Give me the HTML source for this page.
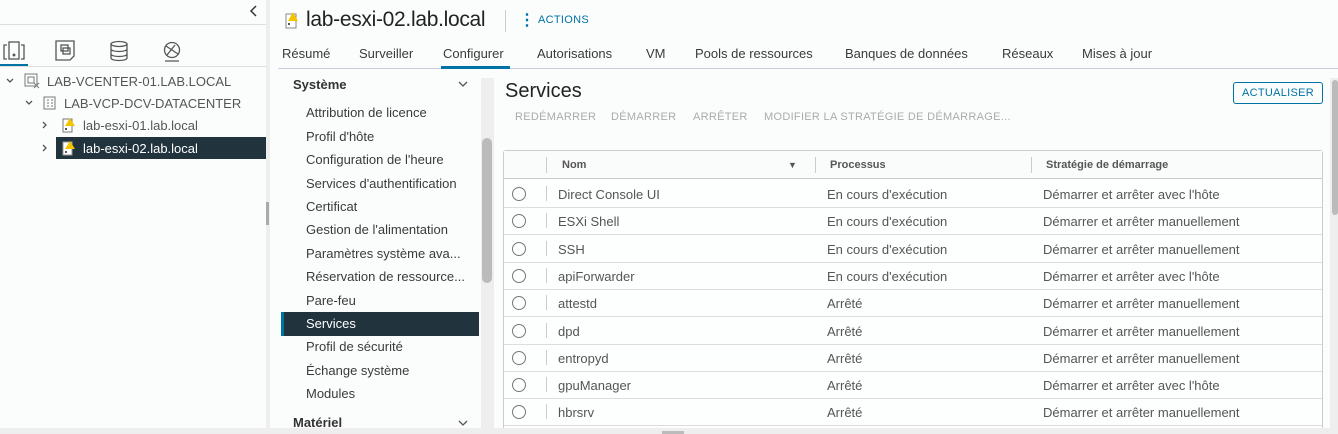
<!DOCTYPE html>
<html><head><meta charset="utf-8"><style>
*{margin:0;padding:0;box-sizing:border-box}
html,body{width:1338px;height:434px;overflow:hidden}
body{background:#fbfdfd;font-family:"Liberation Sans",sans-serif;color:#333;position:relative;font-size:13px}
.a{position:absolute;white-space:nowrap}
.nav{font-size:13px;color:#3a3a3a}
.th{font-size:11px;font-weight:bold;color:#565656}
.td{font-size:13px;color:#555}
.rad{position:absolute;width:14px;height:14px;border:1px solid #777;border-radius:50%;left:512px}
.sep{position:absolute;width:1px;background:#ccc}
</style></head><body>
<!-- left pane -->
<div class="a" style="left:0;top:24px;width:266px;height:1px;background:#ddd"></div>
<svg class="a" style="left:249px;top:5px" width="10" height="12" viewBox="0 0 10 12" fill="none" stroke="#333" stroke-width="1.5"><path d="M7 1L2 6l5 5"/></svg>
<div class="a" style="left:0;top:66px;width:266px;height:1px;background:#ddd"></div>
<div class="a" style="left:0;top:64px;width:28px;height:2px;background:#0072a3"></div>
<svg class="a" style="left:3px;top:40px" width="22" height="22" viewBox="0 0 22 22" fill="none" stroke="#555" stroke-width="1.3"><rect x="6" y="2" width="10" height="17"/><path d="M4 5H1v14h3M18 5h3v14h-3"/><circle cx="11" cy="15" r=".8" fill="#555"/></svg>
<svg class="a" style="left:55px;top:40px" width="22" height="22" viewBox="0 0 22 22" fill="none" stroke="#555" stroke-width="1.3"><path d="M1 1h18v15l-4 4H1z"/><rect x="6" y="5" width="7" height="6"/><rect x="8" y="8" width="7" height="6"/></svg>
<svg class="a" style="left:108px;top:40px" width="22" height="22" viewBox="0 0 22 22" fill="none" stroke="#555" stroke-width="1.3"><ellipse cx="11" cy="4" rx="8" ry="2.5"/><path d="M3 4v14c0 1.5 3.5 2.5 8 2.5s8-1 8-2.5V4M3 9c0 1.5 3.5 2.5 8 2.5s8-1 8-2.5M3 14c0 1.5 3.5 2.5 8 2.5s8-1 8-2.5"/></svg>
<svg class="a" style="left:161px;top:40px" width="22" height="22" viewBox="0 0 22 22" fill="none" stroke="#555" stroke-width="1.3"><circle cx="11" cy="10" r="7.5"/><path d="M5 6l12 8M6 15l8-10M4 21h14"/></svg>
<svg class="a" style="left:6px;top:78px" width="8" height="6" viewBox="0 0 8 6" fill="none" stroke="#555" stroke-width="1.3"><path d="M1 1l3 3 3-3"/></svg>
<svg class="a" style="left:24px;top:73px" width="16" height="16" viewBox="0 0 16 16" fill="none" stroke="#777"><rect x="1" y="1" width="12" height="12"/><rect x="4" y="4" width="6" height="6"/><path d="M10 10l5 5M15 10l-5 5"/></svg>
<div class="a nav" style="left:47px;top:74px;color:#555">LAB-VCENTER-01.LAB.LOCAL</div>
<svg class="a" style="left:25px;top:100px" width="8" height="6" viewBox="0 0 8 6" fill="none" stroke="#555" stroke-width="1.3"><path d="M1 1l3 3 3-3"/></svg>
<svg class="a" style="left:43px;top:96px" width="14" height="14" viewBox="0 0 14 14" fill="none" stroke="#777"><rect x="1" y="1" width="11" height="12"/><path d="M4 4h2M8 4h2M4 7h2M8 7h2M4 10h2M8 10h2"/></svg>
<div class="a nav" style="left:64px;top:96px;color:#555">LAB-VCP-DCV-DATACENTER</div>
<svg class="a" style="left:42px;top:121px" width="6" height="8" viewBox="0 0 6 8" fill="none" stroke="#555" stroke-width="1.3"><path d="M1 1l3 3-3 3"/></svg>
<svg class="a" style="left:62px;top:117px" width="14" height="16" viewBox="0 0 14 16"><rect x="1" y="2" width="9" height="13" fill="#fff" stroke="#777"/><path d="M8 1l5 8H3z" fill="#f5c400"/><rect x="3" y="11" width="2" height="2" fill="#555"/></svg>
<div class="a nav" style="left:83px;top:118px;color:#555">lab-esxi-01.lab.local</div>
<div class="a" style="left:56px;top:137px;width:210px;height:22px;background:#21333d"></div>
<svg class="a" style="left:42px;top:144px" width="6" height="8" viewBox="0 0 6 8" fill="none" stroke="#555" stroke-width="1.3"><path d="M1 1l3 3-3 3"/></svg>
<svg class="a" style="left:62px;top:140px" width="14" height="16" viewBox="0 0 14 16"><rect x="1" y="2" width="9" height="13" fill="#fff" stroke="#999"/><path d="M8 1l5 8H3z" fill="#f5c400"/><rect x="3" y="11" width="2" height="2" fill="#555"/></svg>
<div class="a nav" style="left:83px;top:141px;color:#fff">lab-esxi-02.lab.local</div>
<div class="a" style="left:266px;top:0;width:4px;height:434px;background:#eee"></div>
<div class="a" style="left:266px;top:202px;width:3px;height:23px;background:#aaa"></div>
<!-- header -->
<svg class="a" style="left:285px;top:11px" width="14" height="18" viewBox="0 0 14 18"><rect x="1" y="3" width="10" height="14" fill="#fff" stroke="#888"/><path d="M8 1l5 9H3z" fill="#f5c400"/><rect x="3" y="12" width="2" height="2" fill="#555"/></svg>
<div class="a" style="left:306px;top:8px;font-size:21px;color:#222;letter-spacing:-.3px">lab-esxi-02.lab.local</div>
<div class="a" style="left:505px;top:10px;width:1px;height:22px;background:#ccc"></div>
<div class="a" style="left:519px;top:10px;font-size:16px;font-weight:bold;color:#0072a3">&#8942;</div>
<div class="a" style="left:538px;top:14px;font-size:11px;color:#0072a3;letter-spacing:.3px">ACTIONS</div>
<div class="a nav" style="left:282px;top:46px">Résumé</div>
<div class="a nav" style="left:359px;top:46px">Surveiller</div>
<div class="a nav" style="left:443px;top:46px">Configurer</div>
<div class="a nav" style="left:537px;top:46px">Autorisations</div>
<div class="a nav" style="left:646px;top:46px">VM</div>
<div class="a nav" style="left:695px;top:46px">Pools de ressources</div>
<div class="a nav" style="left:845px;top:46px">Banques de données</div>
<div class="a nav" style="left:1002px;top:46px">Réseaux</div>
<div class="a nav" style="left:1082px;top:46px">Mises à jour</div>
<div class="a" style="left:278px;top:68px;width:1060px;height:1px;background:#ccd"></div>
<div class="a" style="left:441px;top:66px;width:69px;height:3px;background:#0072a3"></div>
<!-- config nav -->
<div class="a" style="left:293px;top:77px;font-size:13px;font-weight:bold;color:#333">Système</div>
<svg class="a" style="left:458px;top:81px" width="10" height="7" viewBox="0 0 10 7" fill="none" stroke="#555" stroke-width="1.3"><path d="M1 1l4 4 4-4"/></svg>
<div class="a" style="left:281px;top:312px;width:198px;height:24px;background:#21333d"></div>
<div class="a" style="left:281px;top:312px;width:3px;height:24px;background:#0072a3"></div>
<div class="a nav" style="left:306px;top:105px">Attribution de licence</div>
<div class="a nav" style="left:306px;top:129px">Profil d'hôte</div>
<div class="a nav" style="left:306px;top:152px">Configuration de l'heure</div>
<div class="a nav" style="left:306px;top:176px">Services d'authentification</div>
<div class="a nav" style="left:306px;top:199px">Certificat</div>
<div class="a nav" style="left:306px;top:222px">Gestion de l'alimentation</div>
<div class="a nav" style="left:306px;top:246px">Paramètres système ava...</div>
<div class="a nav" style="left:306px;top:269px">Réservation de ressource...</div>
<div class="a nav" style="left:306px;top:293px">Pare-feu</div>
<div class="a nav" style="left:306px;top:316px;color:#fff">Services</div>
<div class="a nav" style="left:306px;top:339px">Profil de sécurité</div>
<div class="a nav" style="left:306px;top:363px">Échange système</div>
<div class="a nav" style="left:306px;top:386px">Modules</div>
<div class="a" style="left:293px;top:415px;font-size:13px;font-weight:bold;color:#333">Matériel</div>
<svg class="a" style="left:458px;top:420px" width="10" height="7" viewBox="0 0 10 7" fill="none" stroke="#555" stroke-width="1.3"><path d="M1 1l4 4 4-4"/></svg>
<div class="a" style="left:481px;top:78px;width:13px;height:350px;background:#eee"></div>
<div class="a" style="left:482px;top:138px;width:10px;height:145px;background:#bbb;border-radius:5px"></div>
<!-- services -->
<div class="a" style="left:505px;top:80px;font-size:20px;color:#222">Services</div>
<div class="a" style="left:1233px;top:82px;width:90px;height:22px;border:1px solid #0072a3;border-radius:3px;font-size:11px;color:#0072a3;text-align:center;line-height:20px;letter-spacing:.3px">ACTUALISER</div>
<div class="a" style="left:515px;top:111px;font-size:11px;color:#aaa;letter-spacing:.3px">REDÉMARRER</div>
<div class="a" style="left:611px;top:111px;font-size:11px;color:#aaa;letter-spacing:.3px">DÉMARRER</div>
<div class="a" style="left:693px;top:111px;font-size:11px;color:#aaa;letter-spacing:.3px">ARRÊTER</div>
<div class="a" style="left:764px;top:111px;font-size:11px;color:#aaa;letter-spacing:.3px">MODIFIER LA STRATÉGIE DE DÉMARRAGE...</div>
<div class="a" style="left:503px;top:150px;width:820px;height:290px;border:1px solid #ccc;border-radius:3px;background:#fdfefe"></div>
<div class="a" style="left:504px;top:151px;width:818px;height:28px;background:#fafbfb;border-bottom:1px solid #ccc"></div>
<div class="sep" style="left:546px;top:157px;height:16px"></div>
<div class="sep" style="left:815px;top:157px;height:16px"></div>
<div class="sep" style="left:1031px;top:157px;height:16px"></div>
<div class="a th" style="left:562px;top:159px">Nom</div>
<div class="a" style="left:788px;top:160px;font-size:9px;color:#555">&#9660;</div>
<div class="a th" style="left:830px;top:159px">Processus</div>
<div class="a th" style="left:1046px;top:159px">Stratégie de démarrage</div>
<div id="rows"></div>
<script>
var d=[["Direct Console UI","En cours d'exécution","Démarrer et arrêter avec l'hôte"],["ESXi Shell","En cours d'exécution","Démarrer et arrêter manuellement"],["SSH","En cours d'exécution","Démarrer et arrêter manuellement"],["apiForwarder","En cours d'exécution","Démarrer et arrêter avec l'hôte"],["attestd","Arrêté","Démarrer et arrêter manuellement"],["dpd","Arrêté","Démarrer et arrêter manuellement"],["entropyd","Arrêté","Démarrer et arrêter manuellement"],["gpuManager","Arrêté","Démarrer et arrêter avec l'hôte"],["hbrsrv","Arrêté","Démarrer et arrêter manuellement"]];
var h="";for(var i=0;i<d.length;i++){var t=180+i*27.3;h+='<div class="rad" style="top:'+(t+7)+'px"></div><div class="sep" style="left:546px;top:'+(t+6)+'px;height:15px"></div><div class="a td" style="left:558px;top:'+(t+7)+'px">'+d[i][0]+'</div><div class="a td" style="left:827px;top:'+(t+7)+'px">'+d[i][1]+'</div><div class="a td" style="left:1043px;top:'+(t+7)+'px">'+d[i][2]+'</div><div class="a" style="left:504px;top:'+(t+27)+'px;width:818px;height:1px;background:#ddd"></div>';}
document.getElementById("rows").innerHTML=h;
</script>
<div class="a" style="left:1330px;top:78px;width:8px;height:350px;background:#eee"></div>
<div class="a" style="left:1332px;top:80px;width:6px;height:135px;background:#bbb;border-radius:3px"></div>
<div class="a" style="left:0;top:428px;width:1338px;height:6px;background:#eee;z-index:5"></div>
<div class="a" style="left:662px;top:431px;width:22px;height:3px;background:#bbb;z-index:6"></div>
</body></html>
